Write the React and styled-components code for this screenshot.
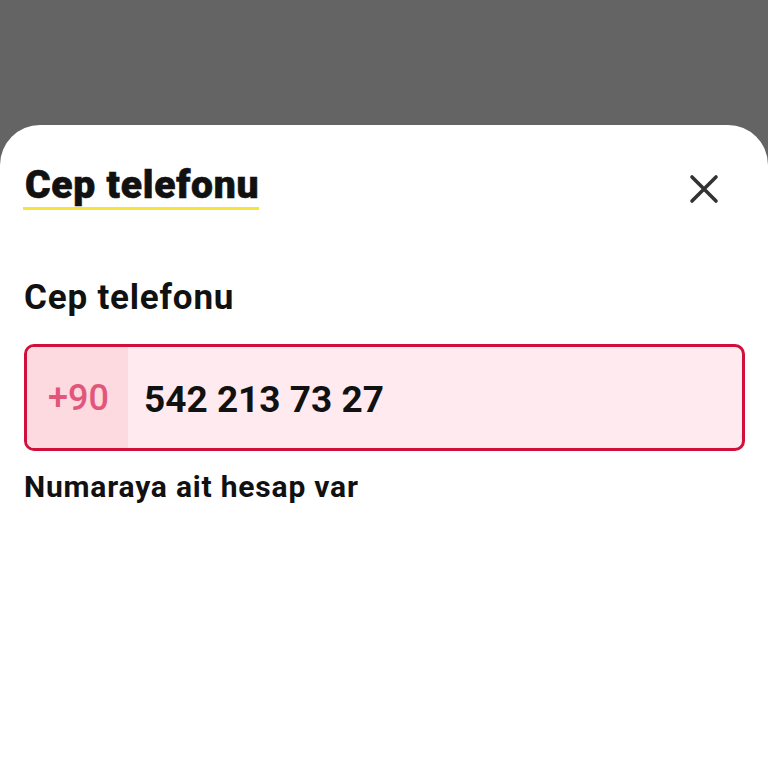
import React, { useState } from "react";
import styled, { createGlobalStyle } from "styled-components";

const GlobalStyle = createGlobalStyle`
  html, body {
    margin: 0;
    padding: 0;
    background: #646464;
    font-family: Roboto, "Liberation Sans", Arial, sans-serif;
  }
  * { box-sizing: border-box; }
`;

const App = () => {
  const [phone, setPhone] = useState("542 213 73 27");

  return (
    <>
      <GlobalStyle />
      <Page>
        <Sheet>
          <SheetHeader>
            <Title>Cep telefonu</Title>
            <CloseButton aria-label="Kapat">
              <svg width="30" height="30" viewBox="0 0 30 30" fill="none">
                <path d="M3 3L27 27M27 3L3 27" stroke="#333" strokeWidth="3.6" strokeLinecap="round" />
              </svg>
            </CloseButton>
          </SheetHeader>

          <Field>
            <Label htmlFor="phone">Cep telefonu</Label>
            <InputBox $error>
              <Prefix>+90</Prefix>
              <PhoneInput id="phone" value={phone} onChange={(e) => setPhone(e.target.value)} />
            </InputBox>
            <Hint>Numaraya ait hesap var</Hint>
          </Field>
        </Sheet>
      </Page>
    </>
  );
};

const Page = styled.div`
  min-height: 768px;
  display: flex;
  flex-direction: column;
  padding-top: 125px;
`;

const Sheet = styled.div`
  flex: 1;
  background: #fff;
  border-radius: 40px 40px 0 0;
  padding: 38px 23px 0 24px;
  display: flex;
  flex-direction: column;
`;

const SheetHeader = styled.div`
  display: flex;
  align-items: flex-start;
  justify-content: space-between;
`;

const Title = styled.h1`
  margin: 0 0 0 -1px;
  font-size: 39px;
  font-weight: 900;
  color: #111;
  line-height: 44px;
  letter-spacing: 0.75px;
  -webkit-text-stroke: 0.6px #111;
  padding: 0 0 0 2px;
  border-bottom: 3px solid #f5e43a;
`;

const CloseButton = styled.button`
  border: none;
  background: none;
  padding: 0;
  margin: 11px 26px 0 0;
  cursor: pointer;
  display: flex;
`;

const Field = styled.div`
  margin-top: 68px;
  display: flex;
  flex-direction: column;
`;

const Label = styled.label`
  font-size: 35px;
  font-weight: 700;
  color: #111;
  line-height: 40px;
  letter-spacing: 0.8px;
`;

const InputBox = styled.div`
  margin-top: 26px;
  height: 107px;
  display: flex;
  border: 3px solid ${(p) => (p.$error ? "#d0103a" : "#ccc")};
  border-radius: 10px;
  background: ${(p) => (p.$error ? "#ffebef" : "#fff")};
  overflow: hidden;
`;

const Prefix = styled.div`
  width: 101px;
  background: #fdd9e0;
  display: flex;
  align-items: center;
  justify-content: center;
  padding-left: 2px;
  font-size: 36px;
  font-weight: 500;
  color: #e0577b;
`;

const PhoneInput = styled.input`
  flex: 1;
  border: none;
  outline: none;
  background: transparent;
  padding: 4px 0 0 16px;
  font-family: inherit;
  font-size: 37px;
  font-weight: 700;
  color: #111;
`;

const Hint = styled.p`
  margin: 18px 0 0;
  font-size: 30px;
  font-weight: 700;
  letter-spacing: 0.8px;
  color: #111;
`;

export default App;
